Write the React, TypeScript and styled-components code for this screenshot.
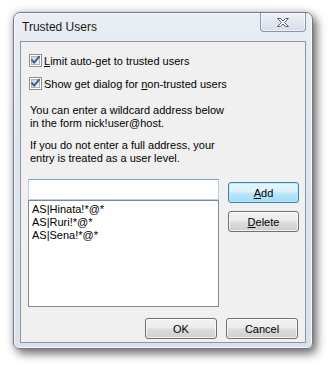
import styled, { createGlobalStyle } from 'styled-components';

const GlobalStyle = createGlobalStyle`
  html, body {
    margin: 0;
    padding: 0;
    background: #ffffff;
  }
  body {
    font-family: "Liberation Sans", Arial, sans-serif;
    font-size: 11px;
    color: #000000;
  }
`;

const Page = styled.div`
  padding: 12px 0 0 13px;
  width: 330px;
  height: 370px;
  box-sizing: border-box;
`;

const DialogWindow = styled.div`
  width: 300px;
  height: 337px;
  box-sizing: border-box;
  border: 1px solid #6f7b8a;
  border-radius: 7px 7px 6px 6px;
  background: linear-gradient(180deg, #e9eef4 0%, #dde5ee 40%, #d9e2ec 100%);
  box-shadow:
    4px 5px 10px rgba(0, 0, 0, 0.5),
    0 0 9px rgba(0, 0, 0, 0.22),
    inset 0 0 0 1px rgba(255, 255, 255, 0.75);
  display: flex;
  flex-direction: column;
  padding: 0 6px 5px 6px;
`;

const TitleBar = styled.div`
  height: 28px;
  display: flex;
  align-items: flex-start;
  justify-content: space-between;
`;

const Title = styled.div`
  font-family: "Liberation Sans", Arial, sans-serif;
  font-size: 12px;
  color: #1a1a1a;
  padding: 7px 0 0 2px;
`;

const CloseButton = styled.div`
  width: 46px;
  height: 19px;
  box-sizing: border-box;
  border: 1px solid #8b97a6;
  border-top: none;
  border-radius: 0 0 4px 4px;
  background: linear-gradient(180deg, #eef2f6 0%, #e2e8ef 50%, #d5dde7 100%);
  box-shadow: inset 0 0 0 1px rgba(255, 255, 255, 0.6);
  display: flex;
  align-items: center;
  justify-content: center;
`;

const Client = styled.div`
  flex: 1;
  border: 1px solid #8a96a3;
  background: #f0f0f0;
  display: flex;
  flex-direction: column;
  padding: 12px 0 0 7px;
`;

const CheckRow = styled.label`
  display: flex;
  align-items: center;
  gap: 2px;
  height: 13px;
  margin-left: 1px;
  margin-bottom: 10px;
`;

const Paragraph = styled.p`
  margin: 0 0 9px 2px;
  line-height: 13px;
  width: 240px;
`;

const Key = styled.span`
  text-decoration: underline;
  text-underline-offset: 1px;
`;

const EntryGrid = styled.div`
  display: grid;
  grid-template-columns: 191px 71px;
  column-gap: 9px;
  margin-top: 5px;
`;

const LeftColumn = styled.div`
  display: flex;
  flex-direction: column;
`;

const RightColumn = styled.div`
  display: flex;
  flex-direction: column;
  gap: 8px;
  padding-top: 3px;
`;

const TextInput = styled.div`
  height: 21px;
  box-sizing: border-box;
  background: #ffffff;
  border: 1px solid #b5cde6;
  border-top-color: #7da2ce;
`;

const ListBox = styled.div`
  height: 107px;
  box-sizing: border-box;
  background: #ffffff;
  border: 1px solid #828790;
  padding: 2px 0 0 3px;
`;

const ListItem = styled.div`
  line-height: 13px;
  height: 13px;
`;

const Button = styled.div<{ $default?: boolean }>`
  height: 21px;
  box-sizing: border-box;
  border: 1px solid ${(p) => (p.$default ? '#3c7fb1' : '#707070')};
  border-radius: 3px;
  display: flex;
  align-items: center;
  justify-content: center;
  background: ${(p) =>
    p.$default
      ? 'linear-gradient(180deg, #eaf6fd 0%, #d9f0fc 48%, #bee6fd 52%, #a7d9f5 100%)'
      : 'linear-gradient(180deg, #f2f2f2 0%, #ebebeb 48%, #dddddd 52%, #cfcfcf 100%)'};
  box-shadow: inset 0 0 0 1px
    ${(p) => (p.$default ? 'rgba(180, 235, 255, 0.9)' : 'rgba(255, 255, 255, 0.7)')};
  color: #000000;
`;

const Footer = styled.div`
  display: flex;
  justify-content: flex-end;
  gap: 9px;
  margin-top: 11px;
  padding-right: 7px;
`;

const FooterButton = styled(Button)`
  width: 72px;
`;

const CheckBox = () => (
  <svg width="13" height="13" viewBox="0 0 13 13">
    <defs>
      <linearGradient id="cbFill" x1="0" y1="0" x2="1" y2="1">
        <stop offset="0" stopColor="#cbcfd5" />
        <stop offset="1" stopColor="#f6f6f6" />
      </linearGradient>
    </defs>
    <rect x="0.5" y="0.5" width="12" height="12" fill="#ffffff" stroke="#8e8f8f" />
    <rect x="2.5" y="2.5" width="8" height="8" fill="url(#cbFill)" stroke="#aeb3b9" />
    <path
      d="M3 6.2 L5.2 8.6 L10 2.8"
      fill="none"
      stroke="#3b5594"
      strokeWidth="1.8"
      strokeLinecap="square"
    />
  </svg>
);

const CloseGlyph = () => (
  <svg width="14" height="11" viewBox="0 0 14 11">
    <path
      d="M1.5 1.5 H4.5 L7 4 L9.5 1.5 H12.5 L8.6 5.5 L12.5 9.5 H9.5 L7 7 L4.5 9.5 H1.5 L5.4 5.5 Z"
      fill="#ffffff"
      stroke="#53606f"
      strokeWidth="1"
      strokeLinejoin="round"
    />
  </svg>
);

const entries = ['AS|Hinata!*@*', 'AS|Ruri!*@*', 'AS|Sena!*@*'];

export default function App() {
  return (
    <Page>
      <GlobalStyle />
      <DialogWindow>
        <TitleBar>
          <Title>Trusted Users</Title>
          <CloseButton>
            <CloseGlyph />
          </CloseButton>
        </TitleBar>
        <Client>
          <CheckRow>
            <CheckBox />
            <span>
              <Key>L</Key>imit auto-get to trusted users
            </span>
          </CheckRow>
          <CheckRow>
            <CheckBox />
            <span>
              Show get dialog for <Key>n</Key>on-trusted users
            </span>
          </CheckRow>
          <Paragraph style={{ marginTop: 4 }}>
            You can enter a wildcard address below
            <br />
            in the form nick!user@host.
          </Paragraph>
          <Paragraph>
            If you do not enter a full address, your
            <br />
            entry is treated as a user level.
          </Paragraph>
          <EntryGrid>
            <LeftColumn>
              <TextInput />
              <ListBox>
                {entries.map((entry) => (
                  <ListItem key={entry}>{entry}</ListItem>
                ))}
              </ListBox>
            </LeftColumn>
            <RightColumn>
              <Button $default>
                <span>
                  <Key>A</Key>dd
                </span>
              </Button>
              <Button>
                <span>
                  <Key>D</Key>elete
                </span>
              </Button>
            </RightColumn>
          </EntryGrid>
          <Footer>
            <FooterButton>OK</FooterButton>
            <FooterButton>Cancel</FooterButton>
          </Footer>
        </Client>
      </DialogWindow>
    </Page>
  );
}
